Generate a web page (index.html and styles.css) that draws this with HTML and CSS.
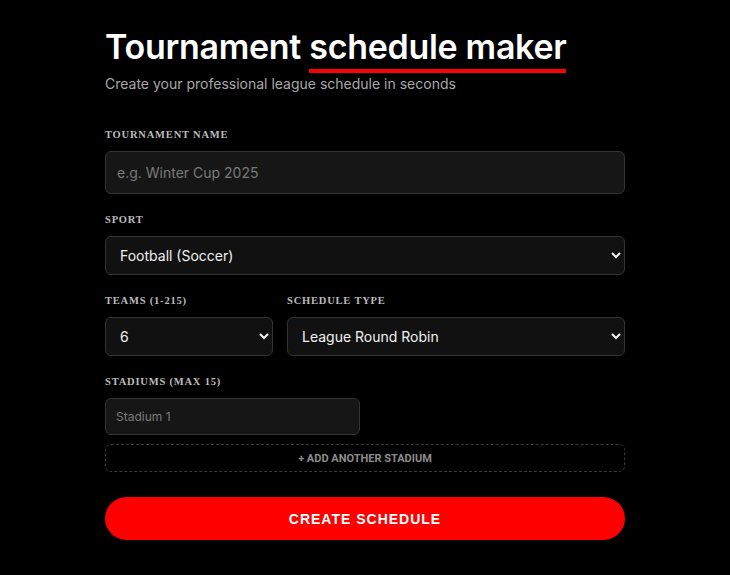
FILE: index.html
```html
<!DOCTYPE html>
<html>
<head>
<meta charset="utf-8">
<link rel="stylesheet" href="styles.css">
</head>
<body>
<main class="wrap">
  <h1 class="title">Tournament <span class="hl">schedule maker</span></h1>
  <p class="sub">Create your professional league schedule in seconds</p>

  <div class="field first">
    <label class="lbl">Tournament Name</label>
    <input class="inp inp-lg" type="text" placeholder="e.g. Winter Cup 2025">
  </div>

  <div class="field">
    <label class="lbl">Sport</label>
    <select class="sel"><option>Football (Soccer)</option></select>
  </div>

  <div class="row">
    <div class="field col-a">
      <label class="lbl">Teams (1-215)</label>
      <select class="sel"><option>6</option></select>
    </div>
    <div class="field col-b">
      <label class="lbl">Schedule Type</label>
      <select class="sel"><option>League Round Robin</option></select>
    </div>
  </div>

  <div class="field">
    <label class="lbl">Stadiums (Max 15)</label>
    <input class="inp inp-sm" type="text" placeholder="Stadium 1">
    <button class="add">+ ADD ANOTHER STADIUM</button>
  </div>

  <button class="cta">CREATE SCHEDULE</button>
</main>
</body>
</html>
```

FILE: styles.css
```css
html, body {
  margin: 0;
  padding: 0;
  background: #000;
  color-scheme: dark;
}
.wrap {
  width: 520px;
  margin: 0 auto;
  padding-top: 26px;
  font-family: Inter, "Noto Sans", sans-serif;
  display: flex;
  flex-direction: column;
}
.title {
  margin: 0;
  font-size: 34px;
  font-weight: 600;
  color: #fff;
  line-height: 42px;
  letter-spacing: -0.3px;
}
.hl {
  border-bottom: 4px solid #ff0000;
  padding-bottom: 2px;
}
.sub {
  margin: 7px 0 0;
  font-size: 14px;
  color: #a8a8a8;
  line-height: 18px;
}
.field {
  display: flex;
  flex-direction: column;
  margin-top: 20px;
}
.field.first { margin-top: 36px; }
.lbl {
  font-family: "Liberation Serif", serif;
  font-weight: bold;
  font-size: 10.5px;
  letter-spacing: 0.8px;
  text-transform: uppercase;
  color: #bcbcbc;
  line-height: 12px;
  margin-bottom: 10px;
}
.inp, .sel {
  box-sizing: border-box;
  background: #161616;
  border: 1px solid #333;
  border-radius: 6px;
  color: #fff;
  font-family: Inter, "Noto Sans", sans-serif;
  outline: none;
}
.inp::placeholder { color: #7a7a7a; }
.inp-lg {
  height: 43px;
  padding: 0 11px;
  font-size: 14px;
}
.sel {
  height: 39px;
  padding: 0 10px;
  font-size: 14px;
  background: #111;
  color: #f2f2f2;
}
.row {
  display: flex;
  gap: 14px;
}
.col-a { width: 168px; }
.col-b { flex: 1; }
.inp-sm {
  width: 255px;
  height: 37px;
  padding: 0 10px;
  font-size: 12px;
  background: #161616;
}
.add {
  margin-top: 9px;
  height: 28px;
  background: transparent;
  border: 1px dashed #3a3a3a;
  border-radius: 6px;
  color: #8c8c8c;
  font-family: Roboto, "Noto Sans", sans-serif;
  font-weight: 700;
  font-size: 11px;
  letter-spacing: 0;
}
.cta {
  margin-top: 25px;
  height: 43px;
  border: none;
  border-radius: 22px;
  background: #ff0000;
  color: #fff;
  font-family: "Liberation Sans", Arial, sans-serif;
  font-weight: 900;
  font-size: 14px;
  letter-spacing: 1px;
}
```
